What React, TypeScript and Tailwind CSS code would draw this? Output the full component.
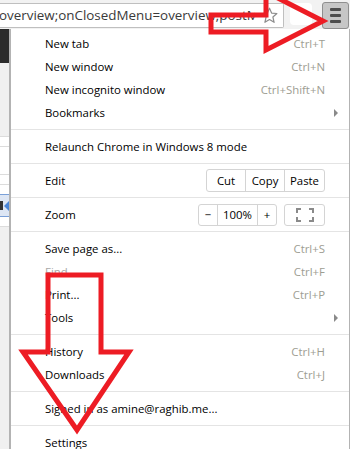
import type { ReactNode } from 'react'

const ui = { fontFamily: '"Open Sans", "Noto Sans", sans-serif' }

function Item({ label, shortcut, sub, disabled }: { label: string; shortcut?: string; sub?: boolean; disabled?: boolean }) {
  return (
    <div className="h-[23px] flex items-center pl-[34px] pr-[24px] relative">
      <span className={disabled ? 'text-[#a8a8a8]' : 'text-black'}>{label}</span>
      <span className="ml-auto text-[#9d9d92]">{shortcut}</span>
      {sub && (
        <span className="absolute right-[11px] top-[8px] w-0 h-0 border-y-[4px] border-y-transparent border-l-[4px] border-l-[#8a8a8a]" />
      )}
    </div>
  )
}

function Sep() {
  return <div className="h-[11px] flex items-center"><div className="h-px w-full bg-[#e4e4e4]" /></div>
}

function Btn({ children, w, last }: { children: ReactNode; w: string; last?: boolean }) {
  return (
    <div className={`${w} h-full flex items-center justify-center ${last ? '' : 'border-r border-[#d4d4d4]'}`}>
      {children}
    </div>
  )
}

function PageStrip() {
  return (
    <div className="w-[9px] shrink-0 flex flex-col bg-[#f0f0f0]">
      <div className="h-[34px] bg-[#2b2b2b]" />
      <div className="h-[73px]" />
      <div className="h-[11px] bg-white border-y border-[#dcdcdc]" />
      <div className="h-[27px] bg-white" />
      <div className="h-[11px] bg-white border-y border-[#dcdcdc]" />
      <div className="h-[9px] bg-white" />
      <div className="h-[23px] bg-[#dde6f4] border-y border-[#7aa0d8] relative overflow-hidden">
        <span className="absolute left-0 top-[6px] w-[3px] h-[9px] bg-[#333]" />
        <span className="absolute right-0 top-[6px] w-0 h-0 border-y-[5px] border-y-transparent border-r-[5px] border-r-[#4a86d8]" />
      </div>
      <div className="h-[10px] bg-white border-b border-[#dcdcdc]" />
    </div>
  )
}

export default function App() {
  return (
    <div className="w-[350px] h-[449px] relative overflow-hidden bg-[#f2f2f2] flex flex-col text-[11.4px]" style={ui}>
      {/* toolbar */}
      <div className="h-[29px] shrink-0 flex items-start">
        <div className="mt-[3px] w-[284px] h-[25px] bg-white border border-l-0 border-[#bfbfbf] rounded-r-[2px] flex items-center relative overflow-hidden">
          <span className="text-[13.4px] text-[#3a3a3a] whitespace-nowrap -ml-[1px] w-[256px] overflow-hidden">
            overview;onClosedMenu=overview;postM
          </span>
          <svg className="absolute left-[261px] top-[3px]" width="17" height="17" viewBox="0 0 17 17">
            <path d="M8.5 1.2 L10.6 6.1 L15.9 6.5 L11.9 10 L13.1 15.3 L8.5 12.5 L3.9 15.3 L5.1 10 L1.1 6.5 L6.4 6.1 Z" fill="none" stroke="#8c8c8c" strokeWidth="1.2" strokeLinejoin="round" />
          </svg>
        </div>
        <div className="mt-[3px] ml-[6px] w-[22px] h-[22px] bg-white rounded-[4px]" />
        <div className="mt-[2px] ml-[10px] w-[27px] h-[27px] rounded-[3px] border border-[#8f8f8f] bg-[#c6c6c6] flex flex-col items-center justify-center gap-[3px]">
          <div className="w-[11px] h-[3px] bg-[#4d4d4d] rounded-[1px]" />
          <div className="w-[11px] h-[3px] bg-[#4d4d4d] rounded-[1px]" />
          <div className="w-[11px] h-[3px] bg-[#4d4d4d] rounded-[1px]" />
        </div>
      </div>

      <div className="flex-1 flex min-h-0">
        <PageStrip />
        {/* menu */}
        <div className="flex-1 bg-white border-l-2 border-r border-l-[#b3b3b3] border-r-[#b3b3b3] pt-[3px]">
          <Item label="New tab" shortcut="Ctrl+T" />
          <Item label="New window" shortcut="Ctrl+N" />
          <Item label="New incognito window" shortcut="Ctrl+Shift+N" />
          <Item label="Bookmarks" sub />
          <Sep />
          <Item label="Relaunch Chrome in Windows 8 mode" />
          <Sep />
          <div className="h-[23px] flex items-center pl-[34px] pr-[24px]">
            <span>Edit</span>
            <div className="ml-auto h-[23px] flex border border-[#d4d4d4] rounded-[3px]">
              <Btn w="w-[39px]">Cut</Btn>
              <Btn w="w-[39px]">Copy</Btn>
              <Btn w="w-[39px]" last>Paste</Btn>
            </div>
          </div>
          <Sep />
          <div className="h-[23px] flex items-center pl-[34px] pr-[24px]">
            <span>Zoom</span>
            <div className="ml-auto h-[22px] flex border border-[#d4d4d4] rounded-[3px]">
              <Btn w="w-[19px]">&minus;</Btn>
              <Btn w="w-[40px]">100%</Btn>
              <Btn w="w-[18px]" last>+</Btn>
            </div>
            <div className="ml-[7px] w-[41px] h-[22px] border border-[#d4d4d4] rounded-[3px] flex items-center justify-center">
              <svg width="18" height="14" viewBox="0 0 18 14">
                <path d="M1 5V1H5 M13 1H17V5 M17 9V13H13 M5 13H1V9" fill="none" stroke="#8a8a8a" strokeWidth="2" />
              </svg>
            </div>
          </div>
          <Sep />
          <Item label="Save page as..." shortcut="Ctrl+S" />
          <Item label="Find..." shortcut="Ctrl+F" disabled />
          <Item label="Print..." shortcut="Ctrl+P" />
          <Item label="Tools" sub />
          <Sep />
          <Item label="History" shortcut="Ctrl+H" />
          <Item label="Downloads" shortcut="Ctrl+J" />
          <Sep />
          <Item label="Signed in as amine@raghib.me..." />
          <Sep />
          <Item label="Settings" />
        </div>
      </div>

      {/* annotation arrows */}
      <svg className="absolute inset-0 pointer-events-none" width="350" height="449" viewBox="0 0 350 449">
        <polygon points="211,15 266,15 266,-8 323,21 266,50 266,32 211,32" fill="none" stroke="#ed1c24" strokeWidth="5" strokeLinejoin="miter" />
        <polygon points="48,275 101,275 101,352 129,352 77,430 23,352 48,352" fill="none" stroke="#ed1c24" strokeWidth="5" strokeLinejoin="miter" />
      </svg>
    </div>
  )
}
